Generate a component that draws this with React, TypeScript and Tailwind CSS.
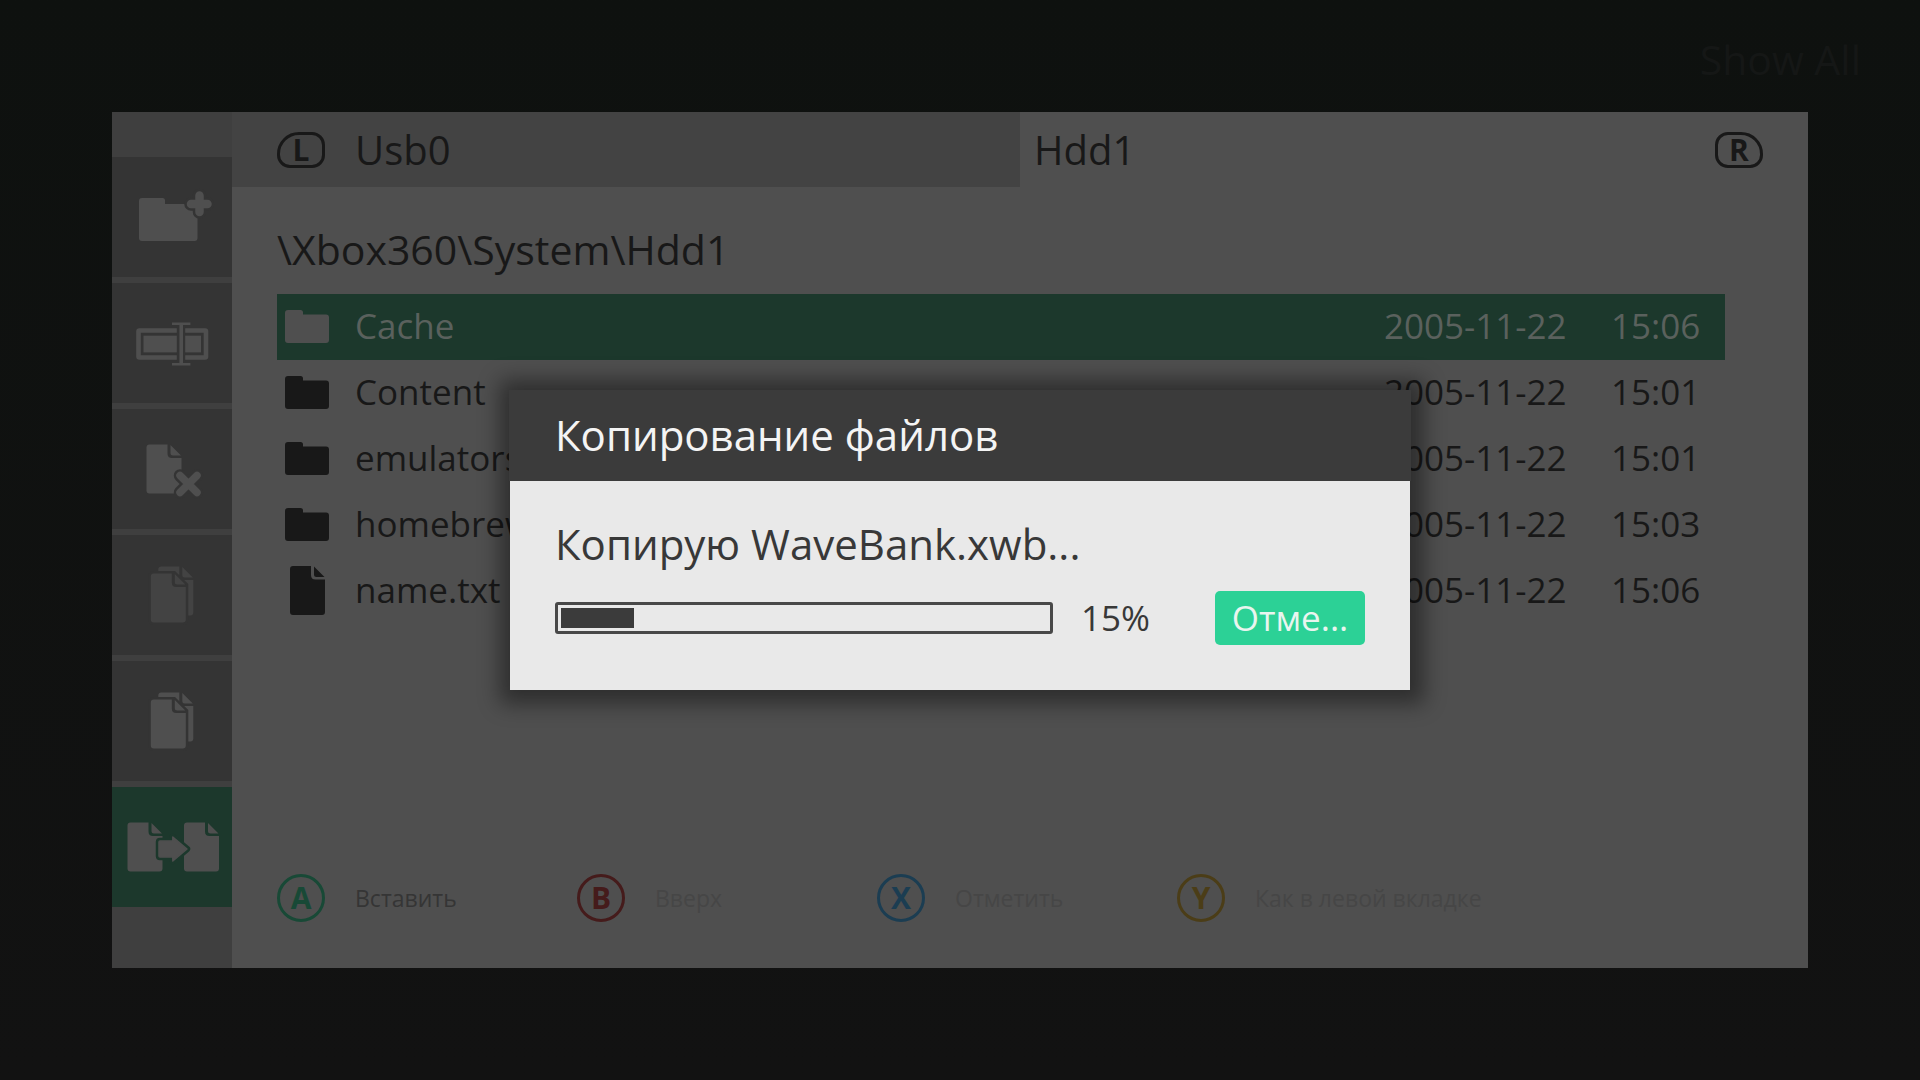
import type { ReactNode } from "react";

const DOC =
  "M3 0H21V9Q21 13.5 25.5 13.5H35V46Q35 49 32 49H3Q0 49 0 46V3Q0 0 3 0Z M24 0.5L34.5 11H26.5Q24 11 24 8.5Z";

function FolderPlusIcon() {
  return (
    <svg viewBox="0 0 120 120" className="size-full" aria-hidden="true">
      <path
        fill="currentColor"
        d="M30 41H50.5Q53 41 53 43.500V47H82.500Q85.500 47 85.500 50V81Q85.500 84 82.500 84H30Q27 84 27 81V44Q27 41 30 41Z"
      />
      <path d="M87.500 38.500V55M79 47H95.500" stroke="#343434" strokeWidth="13.500" strokeLinecap="round" />
      <path d="M87.500 38.500V55M79 47H95.500" stroke="currentColor" strokeWidth="8.500" strokeLinecap="round" />
    </svg>
  );
}

function RenameIcon() {
  return (
    <svg viewBox="0 0 120 120" className="size-full" aria-hidden="true" fill="none">
      <rect x="26.500" y="47.500" width="67.500" height="27" rx="1" stroke="currentColor" strokeWidth="4.600" />
      <rect x="31.500" y="52.700" width="57.500" height="16.700" fill="currentColor" />
      <rect x="64.800" y="44" width="8.400" height="34" fill="#343434" />
      <path d="M60 40.800H78.400M60 81.300H78.400" stroke="currentColor" strokeWidth="2.600" />
      <path d="M69.200 40V82" stroke="currentColor" strokeWidth="3.600" />
    </svg>
  );
}

function DeleteFileIcon() {
  return (
    <svg viewBox="0 0 120 120" className="size-full" aria-hidden="true" strokeLinecap="round">
      <path d={DOC} transform="translate(34.500 35.500)" fill="currentColor" />
      <path d="M68 66.500L85 83.500M85 66.500L68 83.500" stroke="#343434" strokeWidth="12.500" />
      <path d="M68 66.500L85 83.500M85 66.500L68 83.500" stroke="currentColor" strokeWidth="7.500" />
    </svg>
  );
}

function CopyIcon() {
  return (
    <svg viewBox="0 0 120 120" className="size-full" aria-hidden="true" fill="currentColor">
      <path d={DOC} transform="translate(46.300 31.500)" />
      <path
        d="M42 38.500H62L73.800 50V84.500Q73.800 87.500 70.800 87.500H41.800Q38.800 87.500 38.800 84.500V41.500Q38.800 38.500 42 38.500Z"
        fill="#343434"
        stroke="#343434"
        strokeWidth="5"
      />
      <path d={DOC} transform="translate(38.800 38.500)" />
    </svg>
  );
}

function MoveIcon() {
  const arrow = "M48 54H60.800V50L75 62L60.800 74V70H48Q47 70 47 69V55Q47 54 48 54Z";
  return (
    <svg viewBox="0 0 120 120" className="size-full" aria-hidden="true" fill="currentColor" strokeLinejoin="round">
      <path d={DOC} transform="translate(15.500 35.500)" />
      <path d={DOC} transform="translate(72 35.500)" />
      <path d={arrow} stroke="#1c382c" strokeWidth="6.500" />
      <path d={arrow} stroke="currentColor" strokeWidth="1.500" />
    </svg>
  );
}

function FolderIcon() {
  return (
    <svg viewBox="0 0 44 33" className="h-[33px] w-[44px]" aria-hidden="true" fill="currentColor">
      <path d="M3 0H15.500Q18 0 18 2.500V4.500H41Q44 4.500 44 7.500V30Q44 33 41 33H3Q0 33 0 30V3Q0 0 3 0Z" />
    </svg>
  );
}

function FileIcon() {
  return (
    <svg viewBox="0 0 35 49" className="h-[49px] w-[35px]" aria-hidden="true" fill="currentColor">
      <path d={DOC} />
    </svg>
  );
}

const tools: { label: string; icon: ReactNode; tone: string }[] = [
  { label: "Новая папка", icon: <FolderPlusIcon />, tone: "bg-[#343434] text-[#4f4f4f]" },
  { label: "Переименовать", icon: <RenameIcon />, tone: "bg-[#343434] text-[#4f4f4f]" },
  { label: "Удалить", icon: <DeleteFileIcon />, tone: "bg-[#343434] text-[#4f4f4f]" },
  { label: "Вырезать", icon: <CopyIcon />, tone: "bg-[#343434] text-[#434343]" },
  { label: "Копировать", icon: <CopyIcon />, tone: "bg-[#343434] text-[#4f4f4f]" },
  { label: "Переместить", icon: <MoveIcon />, tone: "bg-[#1c382c] text-[#4f4f4f]" },
];

const files = [
  { name: "Cache", date: "2005-11-22", time: "15:06", folder: true, selected: true },
  { name: "Content", date: "2005-11-22", time: "15:01", folder: true, selected: false },
  { name: "emulators", date: "2005-11-22", time: "15:01", folder: true, selected: false },
  { name: "homebrew", date: "2005-11-22", time: "15:03", folder: true, selected: false },
  { name: "name.txt", date: "2005-11-22", time: "15:06", folder: false, selected: false },
];

const hints = [
  { key: "A", label: "Вставить", ring: "border-[#184936] text-[#184936]", text: "text-[#353535]" },
  { key: "B", label: "Вверх", ring: "border-[#451b1b] text-[#451b1b]", text: "text-[#464646]" },
  { key: "X", label: "Отметить", ring: "border-[#1b3d52] text-[#1b3d52]", text: "text-[#464646]" },
  { key: "Y", label: "Как в левой вкладке", ring: "border-[#4b3d17] text-[#4b3d17]", text: "text-[#464646]" },
];

const percent = 15;

export default function App() {
  return (
    <div className="flex min-h-screen flex-col bg-linear-to-b from-[#0e110f] to-[#121212] font-['Open_Sans','Noto_Sans',sans-serif] text-[#181818]">
      <header className="flex h-28 items-center justify-end pt-2 pr-[59px] text-[41px] text-[#151716]">Show All</header>

      <main className="mx-28 mb-28 flex flex-1 bg-[#4f4f4f]">
        <nav className="flex w-[120px] shrink-0 flex-col gap-1.5 bg-[#3f3f3f] pt-[45px]">
          {tools.map((t) => (
            <button key={t.label} type="button" aria-label={t.label} className={`size-[120px] ${t.tone}`}>
              {t.icon}
            </button>
          ))}
        </nav>

        <section className="flex flex-1 flex-col">
          <div className="grid h-[75px] grid-cols-2 text-[40px]">
            <button type="button" className="flex items-center gap-[30px] bg-[#434343] pl-[45px]">
              <span className="flex h-9 w-12 items-center justify-center rounded-[13px] rounded-tl-[22px] border-3 border-current text-[30px] leading-none font-bold">
                L
              </span>
              Usb0
            </button>
            <button type="button" className="flex items-center justify-between pr-[45px] pl-[14px]">
              Hdd1
              <span className="flex h-9 w-12 items-center justify-center rounded-[13px] rounded-tr-[22px] border-3 border-current text-[30px] leading-none font-bold">
                R
              </span>
            </button>
          </div>

          <h1 className="mt-8 mb-[15px] pl-[45px] text-[41px] leading-[60px]">{"\\Xbox360\\System\\Hdd1"}</h1>

          <div className="pr-[83px] pl-[45px]">
            <table className="w-full table-fixed text-left text-[35px] leading-[48px]">
              <colgroup>
                <col className="w-[78px]" />
                <col />
                <col className="w-[227px]" />
                <col className="w-[114px]" />
              </colgroup>
              <tbody>
                {files.map((f) => (
                  <tr key={f.name} className={f.selected ? "h-[66px] bg-[#1c382c] text-[#5a615d]" : "h-[66px]"}>
                    <td className="pb-0.5">
                      <span className={f.selected ? "flex w-[60px] justify-center text-[#4f4f4f]" : "flex w-[60px] justify-center"}>
                        {f.folder ? <FolderIcon /> : <FileIcon />}
                      </span>
                    </td>
                    <td className="pb-0.5">{f.name}</td>
                    <td className="pb-0.5">{f.date}</td>
                    <td className="pb-0.5">{f.time}</td>
                  </tr>
                ))}
              </tbody>
            </table>
          </div>

          <footer className="mt-auto grid grid-cols-[300px_300px_300px_auto] pb-[46px] pl-[45px] text-[23px]">
            {hints.map((h) => (
              <button key={h.key} type="button" className={`flex items-center gap-[30px] ${h.text}`}>
                <span className={`flex size-12 items-center justify-center rounded-full border-3 text-[30px] leading-none font-bold ${h.ring}`}>
                  {h.key}
                </span>
                {h.label}
              </button>
            ))}
          </footer>
        </section>
      </main>

      <div className="fixed inset-0 grid place-items-center">
        <div
          role="dialog"
          aria-labelledby="copy-title"
          className="w-[900px] text-[42px] shadow-[2px_2px_20px_12px_rgba(0,0,0,0.42)]"
        >
          <h2 id="copy-title" className="-mx-px flex h-[91px] items-center bg-[#3b3b3b] px-[46px] pb-0.5 text-[#f4f4f4]">
            Копирование файлов
          </h2>
          <div className="bg-[#e9e9e9] px-[45px] pt-[33px] pb-[45px] text-[#383838]">
            <p className="leading-[60px]">Копирую WaveBank.xwb...</p>
            <div className="mt-[17px] flex items-center text-[35px] leading-[54px]">
              <div
                role="progressbar"
                aria-label="Копирование файлов"
                aria-valuenow={percent}
                aria-valuemin={0}
                aria-valuemax={100}
                className="h-8 flex-1 rounded-[3px] border-3 border-[#484848] p-[3px]"
              >
                <div className="h-full bg-[#3b3b3b]" style={{ width: `${percent}%` }} />
              </div>
              <span className="w-[162px] pl-7">{percent}%</span>
              <button type="button" className="h-[54px] w-[150px] rounded-[5px] bg-[#2cd196] text-[#e9f5ef]">
                Отме...
              </button>
            </div>
          </div>
        </div>
      </div>
    </div>
  );
}
